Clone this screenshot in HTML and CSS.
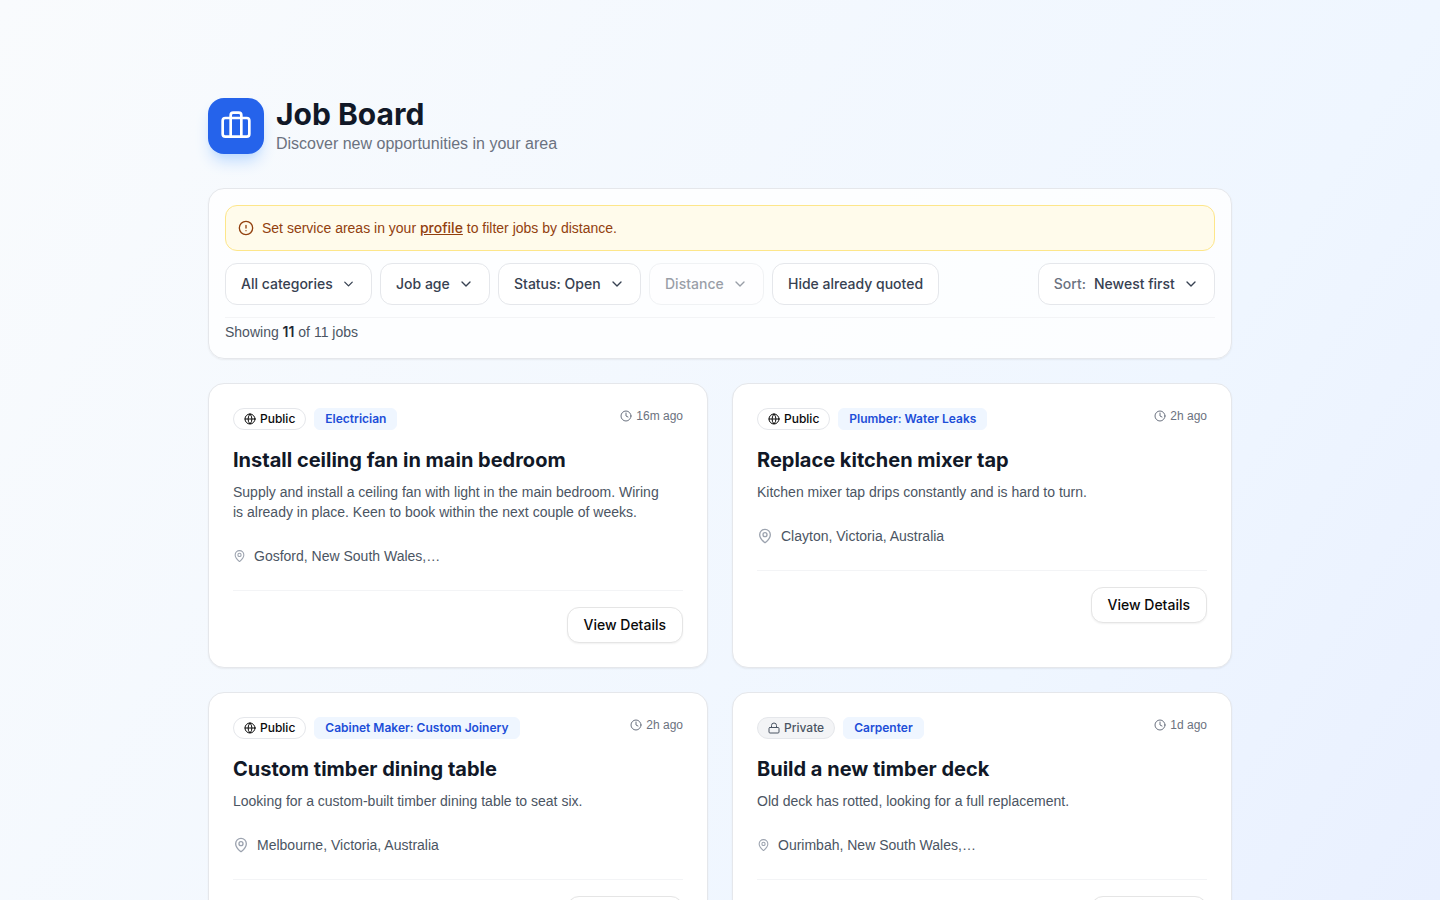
FILE: index.html
```html
<!DOCTYPE html>
<html lang="en">
<head>
    <meta charset="UTF-8">
    <meta name="viewport" content="width=device-width, initial-scale=1.0">
    <title>Job Board</title>
    <link rel="stylesheet" href="styles.css">
</head>
<body>
    <!-- Shared icons -->
    <svg class="sprite" aria-hidden="true">
        <symbol id="icon-luggage" viewBox="0 0 24 24">
            <rect x="2" y="6" width="20" height="14" rx="2"/>
            <path d="M16 20V4a2 2 0 0 0-2-2h-4a2 2 0 0 0-2 2v16"/>
        </symbol>
        <symbol id="icon-alert" viewBox="0 0 24 24">
            <circle cx="12" cy="12" r="10"/>
            <path d="M12 8v4M12 16h.01"/>
        </symbol>
        <symbol id="icon-chevron" viewBox="0 0 24 24">
            <path d="m6 9 6 6 6-6"/>
        </symbol>
        <symbol id="icon-globe" viewBox="0 0 24 24">
            <circle cx="12" cy="12" r="10"/>
            <path d="M12 2a14.5 14.5 0 0 0 0 20 14.5 14.5 0 0 0 0-20M2 12h20"/>
        </symbol>
        <symbol id="icon-lock" viewBox="0 0 24 24">
            <rect x="2" y="11" width="20" height="11" rx="2"/>
            <path d="M7 11V7a5 5 0 0 1 10 0v4"/>
        </symbol>
        <symbol id="icon-clock" viewBox="0 0 24 24">
            <circle cx="12" cy="12" r="10"/>
            <path d="M12 6v6l4 2"/>
        </symbol>
        <symbol id="icon-pin" viewBox="0 0 24 24">
            <path d="M20 10c0 4.993-5.539 10.193-7.399 11.799a1 1 0 0 1-1.202 0C9.539 20.193 4 14.993 4 10a8 8 0 0 1 16 0"/>
            <circle cx="12" cy="10" r="3"/>
        </symbol>
    </svg>

    <main class="container">
        <header class="page-header">
            <div class="logo"><svg class="icon"><use href="#icon-luggage"/></svg></div>
            <div>
                <h1>Job Board</h1>
                <p class="subtitle">Discover new opportunities in your area</p>
            </div>
        </header>

        <section class="filters">
            <div class="notice">
                <svg class="icon"><use href="#icon-alert"/></svg>
                <p>Set service areas in your <a href="#profile">profile</a> to filter jobs by distance.</p>
            </div>
            <div class="filter-row">
                <div class="dropdown">
                    <select id="category" aria-label="Category"><option>All categories</option></select>
                    <svg class="icon thin"><use href="#icon-chevron"/></svg>
                </div>
                <div class="dropdown">
                    <select id="age" aria-label="Job age"><option>Job age</option></select>
                    <svg class="icon"><use href="#icon-chevron"/></svg>
                </div>
                <div class="dropdown">
                    <select id="status" aria-label="Status"><option>Status: Open</option></select>
                    <svg class="icon"><use href="#icon-chevron"/></svg>
                </div>
                <div class="dropdown disabled">
                    <select id="distance" aria-label="Distance" disabled><option>Distance</option></select>
                    <svg class="icon"><use href="#icon-chevron"/></svg>
                </div>
                <button type="button" class="toggle">Hide already quoted</button>
                <div class="dropdown sort">
                    <label for="sort">Sort:</label>
                    <select id="sort"><option>Newest first</option></select>
                    <svg class="icon"><use href="#icon-chevron"/></svg>
                </div>
            </div>
            <p class="summary">Showing <strong>11</strong> of 11 jobs</p>
        </section>

        <section class="jobs">
            <article class="job">
                <div class="job-top">
                    <span class="badge"><svg class="icon"><use href="#icon-globe"/></svg>Public</span>
                    <span class="tag">Electrician</span>
                    <span class="time"><svg class="icon"><use href="#icon-clock"/></svg>16m ago</span>
                </div>
                <h2>Install ceiling fan in main bedroom</h2>
                <p class="description">Supply and install a ceiling fan with light in the main bedroom. Wiring is&nbsp;already in place. Keen to book within the next couple of weeks.</p>
                <p class="location"><svg class="icon small"><use href="#icon-pin"/></svg>Gosford, New South Wales,…</p>
                <div class="job-footer"><button type="button" class="details">View Details</button></div>
            </article>

            <article class="job">
                <div class="job-top">
                    <span class="badge"><svg class="icon"><use href="#icon-globe"/></svg>Public</span>
                    <span class="tag">Plumber: Water Leaks</span>
                    <span class="time"><svg class="icon"><use href="#icon-clock"/></svg>2h ago</span>
                </div>
                <h2>Replace kitchen mixer tap</h2>
                <p class="description">Kitchen mixer tap drips constantly and is hard to turn.</p>
                <p class="location"><svg class="icon"><use href="#icon-pin"/></svg>Clayton, Victoria, Australia</p>
                <div class="job-footer"><button type="button" class="details">View Details</button></div>
            </article>

            <article class="job">
                <div class="job-top">
                    <span class="badge"><svg class="icon"><use href="#icon-globe"/></svg>Public</span>
                    <span class="tag">Cabinet Maker: Custom Joinery</span>
                    <span class="time"><svg class="icon"><use href="#icon-clock"/></svg>2h ago</span>
                </div>
                <h2>Custom timber dining table</h2>
                <p class="description">Looking for a custom-built timber dining table to seat six.</p>
                <p class="location"><svg class="icon"><use href="#icon-pin"/></svg>Melbourne, Victoria, Australia</p>
                <div class="job-footer"><button type="button" class="details">View Details</button></div>
            </article>

            <article class="job">
                <div class="job-top">
                    <span class="badge private"><svg class="icon"><use href="#icon-lock"/></svg>Private</span>
                    <span class="tag">Carpenter</span>
                    <span class="time"><svg class="icon"><use href="#icon-clock"/></svg>1d ago</span>
                </div>
                <h2>Build a new timber deck</h2>
                <p class="description">Old deck has rotted, looking for a full replacement.</p>
                <p class="location"><svg class="icon small"><use href="#icon-pin"/></svg>Ourimbah, New South Wales,…</p>
                <div class="job-footer"><button type="button" class="details">View Details</button></div>
            </article>
        </section>
    </main>
</body>
</html>
```
FILE: styles.css
```css
* {
    box-sizing: border-box;
}
body {
    margin: 0;
    min-height: 100vh;
    font-family: "Liberation Sans", Arial, sans-serif;
    font-size: 14px;
    line-height: 20px;
    color: #4b5563;
    background: #e0e7ff linear-gradient(to bottom right, #f9fbfd, #eff6ff, #e0e7ff) no-repeat;
    background-size: 100% 2250px;
}
h1, h2, p {
    margin: 0;
}
button, select {
    font: inherit;
}
/* Headings and controls are set in Inter */
h1, h2, .dropdown, .toggle, .details, .badge, .tag, .notice a, .summary strong {
    font-family: Inter, "Liberation Sans", sans-serif;
}
.sprite {
    display: none;
}
.icon {
    width: 16px;
    height: 16px;
    flex: none;
    fill: none;
    stroke: currentColor;
    stroke-width: 2;
    stroke-linecap: round;
    stroke-linejoin: round;
}
.container {
    max-width: 1072px;
    margin: 0 auto;
    padding: 96px 24px 48px;
}

/* Header */
.page-header {
    display: flex;
    align-items: center;
    gap: 12px;
    margin-bottom: 32px;
}
.logo {
    display: flex;
    align-items: center;
    justify-content: center;
    width: 56px;
    height: 56px;
    border-radius: 16px;
    background-color: #2563eb;
    color: #fff;
    box-shadow: 0 10px 15px -3px #bfdbfe, 0 4px 6px -4px #bfdbfe;
}
.logo .icon {
    width: 32px;
    height: 32px;
}
h1 {
    font-size: 30px;
    line-height: 36px;
    font-weight: 700;
    color: #111827;
}
.subtitle {
    font-size: 16px;
    line-height: 24px;
    color: #6b7280;
}

/* Filters */
.filters {
    display: flex;
    flex-direction: column;
    gap: 12px;
    margin-bottom: 24px;
    padding: 16px;
    border: 1px solid #e5e7eb;
    border-radius: 16px;
    background-color: rgba(255, 255, 255, 0.8);
    box-shadow: 0 1px 2px rgba(0, 0, 0, 0.06);
}
.notice {
    display: flex;
    align-items: center;
    gap: 8px;
    padding: 12px;
    border: 1px solid #fde68a;
    border-radius: 12px;
    background-color: #fffbeb;
    color: #92400e;
}
.notice a {
    color: inherit;
    font-weight: 500;
}
.filter-row {
    display: flex;
    flex-wrap: wrap;
    gap: 8px;
}
.dropdown, .toggle {
    display: flex;
    align-items: center;
    gap: 8px;
    height: 42px;
    padding: 0 15px;
    border: 1px solid #e5e7eb;
    border-radius: 12px;
    background-color: #fff;
    color: #374151;
    font-weight: 500;
}
.dropdown select {
    appearance: none;
    padding: 0;
    border: none;
    background: none;
    color: inherit;
    opacity: 1;
}
.dropdown .thin {
    width: 15px;
}
.disabled {
    opacity: 0.5;
}
.sort {
    margin-left: auto;
}
.sort label {
    color: #6b7280;
}
.summary {
    padding-top: 4px;
    border-top: 1px solid #f3f4f6;
}
.summary strong {
    font-weight: 600;
    color: #1f2937;
}

/* Job cards */
.jobs {
    display: grid;
    grid-template-columns: repeat(2, 1fr);
    gap: 24px;
}
.job {
    padding: 24px;
    border: 1px solid #e5e7eb;
    border-radius: 16px;
    background-color: #fff;
    box-shadow: 0 1px 2px rgba(0, 0, 0, 0.06);
}
.job-top {
    display: flex;
    align-items: flex-start;
    gap: 8px;
    margin-bottom: 16px;
    font-size: 12px;
    line-height: 16px;
}
.badge, .tag {
    padding: 2px 10px;
    border: 1px solid #e5e7eb;
    font-weight: 500;
}
.badge {
    display: flex;
    align-items: center;
    gap: 4px;
    border-radius: 11px;
    color: #0a0a0a;
}
.badge .icon, .time .icon {
    width: 12px;
    height: 12px;
}
.private {
    background-color: #f3f4f6;
    color: #4b5563;
}
.tag {
    border-color: #eff6ff;
    border-radius: 6px;
    background-color: #eff6ff;
    color: #1d4ed8;
    font-weight: 600;
}
.time {
    display: flex;
    align-items: center;
    gap: 4px;
    margin-left: auto;
    color: #6b7280;
}
h2 {
    margin-bottom: 8px;
    font-size: 20px;
    line-height: 28px;
    font-weight: 700;
    color: #111827;
}
.description {
    margin-bottom: 24px;
}
.location {
    display: flex;
    align-items: center;
    gap: 8px;
    margin-bottom: 24px;
}
.location .icon {
    color: #9ca3af;
}
.location .small {
    width: 13px;
}
.job-footer {
    display: flex;
    justify-content: flex-end;
    padding-top: 16px;
    border-top: 1px solid #f3f4f6;
}
.details {
    height: 36px;
    padding: 0 16px;
    border: 1px solid #e5e5e5;
    border-radius: 12px;
    background-color: #fff;
    color: #0a0a0a;
    font-weight: 500;
    box-shadow: 0 1px 2px rgba(0, 0, 0, 0.06);
}

@media (max-width: 768px) {
    .jobs {
        grid-template-columns: 1fr;
    }
}
```
